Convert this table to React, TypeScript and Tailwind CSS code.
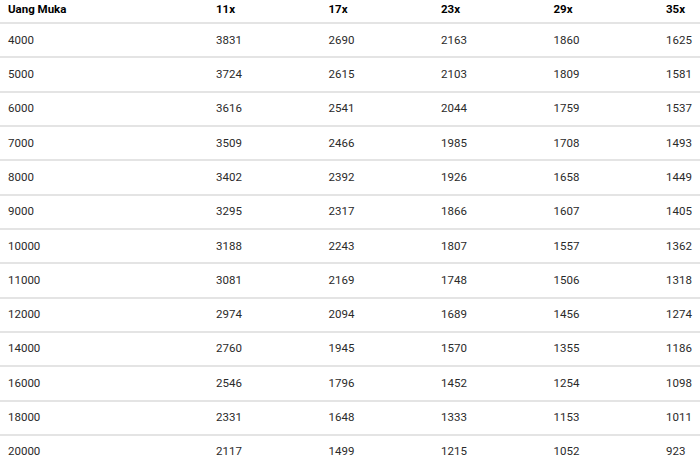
const headers = ['Uang Muka', '11x', '17x', '23x', '29x', '35x'];

const rows: number[][] = [
  [4000, 3831, 2690, 2163, 1860, 1625],
  [5000, 3724, 2615, 2103, 1809, 1581],
  [6000, 3616, 2541, 2044, 1759, 1537],
  [7000, 3509, 2466, 1985, 1708, 1493],
  [8000, 3402, 2392, 1926, 1658, 1449],
  [9000, 3295, 2317, 1866, 1607, 1405],
  [10000, 3188, 2243, 1807, 1557, 1362],
  [11000, 3081, 2169, 1748, 1506, 1318],
  [12000, 2974, 2094, 1689, 1456, 1274],
  [14000, 2760, 1945, 1570, 1355, 1186],
  [16000, 2546, 1796, 1452, 1254, 1098],
  [18000, 2331, 1648, 1333, 1153, 1011],
  [20000, 2117, 1499, 1215, 1052, 923],
];

export default function App() {
  return (
    <div className="h-[461px] w-[700px] overflow-hidden bg-white font-['Roboto',sans-serif] text-[11.5px]">
      <div className="w-[780px]">
        <div className="grid h-[24px] grid-cols-[208px_repeat(5,112.5px)] border-b-2 border-[#e4e4e4] pl-2 pt-px font-bold leading-[16px] text-black">
          {headers.map((h) => (
            <div key={h}>{h}</div>
          ))}
        </div>
        {rows.map((r) => (
          <div
            key={r[0]}
            className="grid h-[34.33px] grid-cols-[208px_repeat(5,112.5px)] items-center border-b-2 border-[#e4e4e4] pl-2 text-[#2a2a2a]"
          >
            {r.map((v, i) => (
              <div key={i}>{v}</div>
            ))}
          </div>
        ))}
      </div>
    </div>
  );
}
